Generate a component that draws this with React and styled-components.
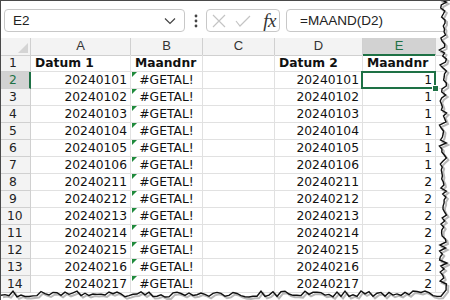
import React from 'react';
import styled, { createGlobalStyle, css } from 'styled-components';

const GREEN = '#1e7145';
const COLS = '30px 100px 72px 72px 88px 73px 1fr';

const GlobalStyle = createGlobalStyle`
  body {
    margin: 0;
    background: #fff;
  }
`;

const Frame = styled.div`
  position: relative;
  width: 450px;
  height: 300px;
  overflow: hidden;
  background: #fff;
  border-top: 1px solid #4a4a4a;
  border-left: 1px solid #4a4a4a;
  box-sizing: border-box;
  font-family: "DejaVu Sans", Verdana, sans-serif;
`;

const FormulaBar = styled.div`
  display: flex;
  align-items: center;
  height: 23px;
  padding: 8px 0 0 3px;
`;

const Box = styled.div`
  display: flex;
  align-items: center;
  height: 23px;
  box-sizing: border-box;
  border: 1px solid #c8c8c8;
  border-radius: 4px;
  background: #fff;
  flex: ${p => (p.$grow ? '1 0 auto' : '0 0 auto')};
  width: ${p => (p.$w ? `${p.$w}px` : 'auto')};
  padding: ${p => p.$pad || '0'};
  font-family: "Liberation Sans", Arial, sans-serif;
  font-size: 13.5px;
  color: #222;
`;

const NameText = styled.span`
  flex: 1;
`;

const Dots = styled.div`
  width: 21px;
  display: flex;
  justify-content: center;
`;

const FxText = styled.span`
  font-family: "Liberation Serif", "Times New Roman", serif;
  font-style: italic;
  font-size: 19px;
  line-height: 19px;
  color: #333;
  margin-left: auto;
  letter-spacing: -0.5px;
`;

const Sheet = styled.div`
  margin-top: 6px;
`;

const Row = styled.div`
  display: grid;
  grid-template-columns: ${COLS};
  height: 17px;
`;

const Corner = styled.div`
  position: relative;
  background: #f3f3f3;
  border-right: 1px solid #d0d0d0;
  border-bottom: 1px solid #d0d0d0;
  &::after {
    content: '';
    position: absolute;
    right: 2px;
    bottom: 2px;
    border-left: 10px solid transparent;
    border-bottom: 10px solid #d4d4d4;
  }
`;

const ColHead = styled.div`
  box-sizing: border-box;
  background: ${p => (p.$active ? '#d2d2d2' : '#f3f3f3')};
  border-right: 1px solid #d0d0d0;
  border-bottom: ${p => (p.$active ? `2px solid ${GREEN}` : '1px solid #d0d0d0')};
  color: ${p => (p.$active ? GREEN : '#333')};
  font-family: "Liberation Sans", Arial, sans-serif;
  font-size: 13px;
  line-height: 16px;
  text-align: center;
`;

const RowHead = styled.div`
  box-sizing: border-box;
  background: ${p => (p.$active ? '#d2d2d2' : '#f3f3f3')};
  border-right: ${p => (p.$active ? `2px solid ${GREEN}` : '1px solid #d0d0d0')};
  border-bottom: 1px solid #d0d0d0;
  color: ${p => (p.$active ? GREEN : '#222')};
  font-size: 12.3px;
  line-height: 16px;
  padding-left: ${p => (p.$wide ? '6px' : '8px')};
`;

const Cell = styled.div`
  position: relative;
  box-sizing: border-box;
  border-right: 1px solid #e1e1e1;
  border-bottom: 1px solid #e1e1e1;
  font-size: 12.3px;
  line-height: 16px;
  color: #111;
  white-space: nowrap;
  text-align: ${p => p.$align || 'left'};
  font-weight: ${p => (p.$bold ? 700 : 400)};
  padding: ${p => (p.$bold ? '0 0 0 4px' : '0 3px 0 3px')};
  ${p => p.$error && css`
    &::before {
      content: '';
      position: absolute;
      left: 1px;
      top: 0;
      border-top: 5px solid #1f8a3c;
      border-right: 5px solid transparent;
    }
  `}
  ${p => p.$selected && css`
    &::after {
      content: '';
      position: absolute;
      left: -2px;
      top: -1px;
      right: -1px;
      bottom: -1px;
      border: 2px solid ${GREEN};
    }
  `}
`;

const Handle = styled.span`
  position: absolute;
  right: -4px;
  bottom: -4px;
  width: 5px;
  height: 5px;
  background: ${GREEN};
  border: 1px solid #fff;
  z-index: 2;
`;

const Tear = styled.svg`
  position: absolute;
  left: 0;
  top: 0;
  pointer-events: none;
`;

const dates = [
  '20240101', '20240102', '20240103', '20240104', '20240105', '20240106',
  '20240211', '20240212', '20240213', '20240214', '20240215', '20240216', '20240217',
];

function tornPath() {
  let s = 7;
  const r = () => {
    s = (s * 16807) % 2147483647;
    return s / 2147483647;
  };
  const pts = [];
  for (let y = -2; y <= 290; y += 3) pts.push([442 + (r() - 0.5) * 8, y]);
  for (let x = 440; x >= -2; x -= 4) pts.push([x, 293 + (r() - 0.5) * 6]);
  return pts.map(([x, y], i) => `${i ? 'L' : 'M'}${x.toFixed(1)} ${y.toFixed(1)}`).join(' ');
}

const edge = tornPath();

const App = () => {
  return (
    <Frame>
      <GlobalStyle />
      <FormulaBar>
        <Box $w={181} $pad="0 8px 0 8px">
          <NameText>E2</NameText>
          <svg width="12" height="8" viewBox="0 0 12 8">
            <polyline points="1,1.5 6,6.5 11,1.5" fill="none" stroke="#444" strokeWidth="1.2" />
          </svg>
        </Box>
        <Dots>
          <svg width="4" height="14" viewBox="0 0 4 14">
            <circle cx="2" cy="2" r="1.4" fill="#444" />
            <circle cx="2" cy="7" r="1.4" fill="#444" />
            <circle cx="2" cy="12" r="1.4" fill="#444" />
          </svg>
        </Dots>
        <Box $w={74} $pad="0 3px 0 5px">
          <svg width="14" height="14" viewBox="0 0 14 14">
            <path d="M1 1 L13 13 M13 1 L1 13" stroke="#c4c4c4" strokeWidth="1.2" />
          </svg>
          <svg width="16" height="14" viewBox="0 0 16 14" style={{ marginLeft: 9 }}>
            <polyline points="1,7 5,12 15,2" fill="none" stroke="#c4c4c4" strokeWidth="1.2" />
          </svg>
          <FxText>fx</FxText>
        </Box>
        <div style={{ width: 6 }} />
        <Box $grow $pad="0 0 0 13px">=MAAND(D2)</Box>
      </FormulaBar>

      <Sheet>
        <Row>
          <Corner />
          <ColHead>A</ColHead>
          <ColHead>B</ColHead>
          <ColHead>C</ColHead>
          <ColHead>D</ColHead>
          <ColHead $active>E</ColHead>
          <ColHead />
        </Row>
        <Row>
          <RowHead>1</RowHead>
          <Cell $bold>Datum 1</Cell>
          <Cell $bold>Maandnr</Cell>
          <Cell />
          <Cell $bold>Datum 2</Cell>
          <Cell $bold>Maandnr</Cell>
          <Cell />
        </Row>
        {dates.map((d, i) => (
          <Row key={d}>
            <RowHead $active={i === 0} $wide={i + 2 >= 10}>{i + 2}</RowHead>
            <Cell $align="right">{d}</Cell>
            <Cell $align="center" $error>#GETAL!</Cell>
            <Cell />
            <Cell $align="right">{d}</Cell>
            <Cell $align="right" $selected={i === 0}>
              {d.slice(4, 6) === '01' ? 1 : 2}
              {i === 0 && <Handle />}
            </Cell>
            <Cell />
          </Row>
        ))}
      </Sheet>

      <Tear width="450" height="300" viewBox="0 0 450 300">
        <path d={`${edge} L-2 302 L452 302 L452 -2 Z`} fill="#fff" />
        <path d={edge} fill="none" stroke="#9a9a9a" strokeWidth="2" transform="translate(2 2)" opacity="0.7" />
        <path d={edge} fill="none" stroke="#111" strokeWidth="1.4" />
      </Tear>
    </Frame>
  );
};

export default App;
